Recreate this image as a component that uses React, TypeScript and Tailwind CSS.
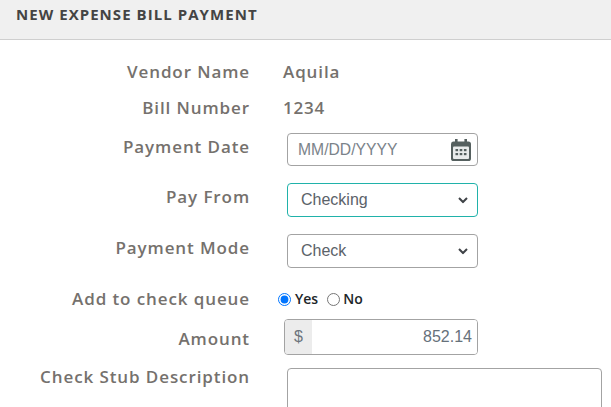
const labelCls = "w-[250px] text-right text-[17px] font-semibold leading-[22px] tracking-[0.9px] text-[#75716d]";

function CalendarIcon() {
  return (
    <svg width="20" height="22" viewBox="0 0 20 22" className="text-[#55605f]">
      <path fill="currentColor" d="M4 0h2.6v2.4h6.8V0H16v2.4h1.4A2.6 2.6 0 0 1 20 5v14.4a2.6 2.6 0 0 1-2.6 2.6H2.6A2.6 2.6 0 0 1 0 19.4V5a2.6 2.6 0 0 1 2.6-2.4H4z" />
      <rect x="2" y="7.5" width="16" height="12.5" rx="1" fill="#e9ecec" />
      <g fill="#55605f">
        <rect x="4.5" y="10" width="2.6" height="2.2" />
        <rect x="8.7" y="10" width="2.6" height="2.2" />
        <rect x="12.9" y="10" width="2.6" height="2.2" />
        <rect x="4.5" y="14" width="2.6" height="2.2" />
        <rect x="8.7" y="14" width="2.6" height="2.2" />
        <rect x="12.9" y="14" width="2.6" height="2.2" />
      </g>
    </svg>
  );
}

function Chevron() {
  return (
    <svg width="10" height="7" viewBox="0 0 10 7" className="absolute right-[9px] top-1/2 -translate-y-1/2">
      <path d="M1 1.5l4 4 4-4" fill="none" stroke="#3f4347" strokeWidth="2" />
    </svg>
  );
}

function FakeSelect({ value, active }: { value: string; active?: boolean }) {
  return (
    <div
      className={
        "relative ml-[37px] flex h-[34px] w-[191px] items-center rounded-[4px] border bg-white pl-[13px] text-[16px] text-[#5b6269] " +
        (active ? "border-[#20b2aa]" : "border-[#a3a3a3]")
      }
    >
      {value}
      <Chevron />
    </div>
  );
}

export default function App() {
  return (
    <div className="h-[407px] w-[611px] overflow-hidden bg-white font-['Open_Sans','Noto_Sans',sans-serif]">
      <div className="flex h-[40px] items-start border-b border-[#cfcfcf] bg-[#f0f0f0] pl-[16px] pt-[4px]">
        <h1 className="text-[15px] font-bold leading-[20px] tracking-[1.05px] text-[#444444]">
          NEW EXPENSE BILL PAYMENT
        </h1>
      </div>

      <div className="flex items-center pt-[21px]">
        <span className={labelCls}>Vendor Name</span>
        <span className="ml-[33px] text-[17px] font-semibold leading-[22px] tracking-[0.9px] text-[#75716d]">Aquila</span>
      </div>

      <div className="flex items-center pt-[14px]">
        <span className={labelCls}>Bill Number</span>
        <span className="ml-[33px] text-[17px] font-semibold leading-[22px] tracking-[0.8px] text-[#75716d]">1234</span>
      </div>

      <div className="mt-[14px] flex items-start">
        <span className={labelCls + " pt-[3px]"}>Payment Date</span>
        <div className="ml-[37px] flex h-[33px] w-[191px] items-center justify-between rounded-[4px] border border-[#a3a3a3] bg-white pl-[10px] pr-[6px] font-['Liberation_Sans',sans-serif] text-[15.7px] text-[#7b838a]">
          MM/DD/YYYY
          <CalendarIcon />
        </div>
      </div>

      <div className="mt-[17px] flex items-start">
        <span className={labelCls + " pt-[3px]"}>Pay From</span>
        <div className="font-['Liberation_Sans',sans-serif]">
          <FakeSelect value="Checking" active />
        </div>
      </div>

      <div className="mt-[17px] flex items-start">
        <span className={labelCls + " pt-[3px]"}>Payment Mode</span>
        <div className="font-['Liberation_Sans',sans-serif]">
          <FakeSelect value="Check" />
        </div>
      </div>

      <div className="mt-[20px] flex items-center">
        <span className={labelCls}>Add to check queue</span>
        <div className="ml-[28px] flex items-center text-[14px] font-semibold leading-[22px] text-[#212529]">
          <input type="radio" name="queue" defaultChecked className="m-0 h-[13px] w-[13px]" />
          <span className="ml-[4px] mr-[9px]">Yes</span>
          <input type="radio" name="queue" className="m-0 h-[13px] w-[13px]" />
          <span className="ml-[3px]">No</span>
        </div>
      </div>

      <div className="mt-[9px] flex items-start">
        <span className={labelCls + " pt-[9px]"}>Amount</span>
        <div className="ml-[34px] flex h-[36px] w-[194px] overflow-hidden rounded-[4px] border border-[#a3a3a3] font-['Liberation_Sans',sans-serif] text-[16px] text-[#6c757d]">
          <span className="flex w-[27px] items-center justify-center bg-[#ececec]">$</span>
          <span className="flex flex-1 items-center justify-end bg-white pr-[5px] text-[#66717b]">852.14</span>
        </div>
      </div>

      <div className="mt-[13px] flex items-start">
        <span className={labelCls + " -mt-[2px]"}>Check Stub Description</span>
        <textarea className="ml-[37px] h-[70px] w-[315px] resize-none rounded-[4px] border border-[#a3a3a3] bg-white" />
      </div>
    </div>
  );
}
